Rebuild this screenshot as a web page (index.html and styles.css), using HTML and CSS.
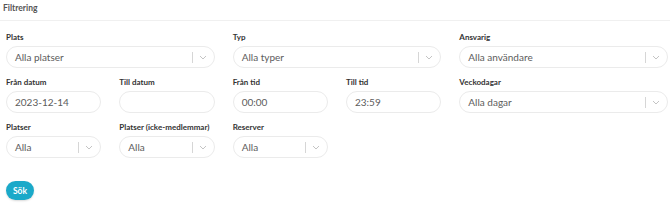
FILE: index.html
```html
<!DOCTYPE html>
<html lang="sv">
<head>
<meta charset="utf-8">
<title>Filtrering</title>
<link rel="stylesheet" href="styles.css">
</head>
<body>
<div class="panel">
  <div class="panel-header">Filtrering</div>
  <form class="filters">
    <div class="grid">
      <div class="field span2">
        <label class="label">Plats</label>
        <div class="select"><span class="value">Alla platser</span><span class="sep"></span><svg class="chev" viewBox="0 0 8 5"><path d="M1 1l3 3 3-3"/></svg></div>
      </div>
      <div class="field span2">
        <label class="label">Typ</label>
        <div class="select"><span class="value">Alla typer</span><span class="sep"></span><svg class="chev" viewBox="0 0 8 5"><path d="M1 1l3 3 3-3"/></svg></div>
      </div>
      <div class="field span2">
        <label class="label">Ansvarig</label>
        <div class="select"><span class="value">Alla användare</span><span class="sep"></span><svg class="chev" viewBox="0 0 8 5"><path d="M1 1l3 3 3-3"/></svg></div>
      </div>

      <div class="field">
        <label class="label">Från datum</label>
        <div class="input"><span class="value">2023-12-14</span></div>
      </div>
      <div class="field">
        <label class="label">Till datum</label>
        <div class="input"><span class="value"></span></div>
      </div>
      <div class="field">
        <label class="label">Från tid</label>
        <div class="input"><span class="value">00:00</span></div>
      </div>
      <div class="field">
        <label class="label">Till tid</label>
        <div class="input"><span class="value">23:59</span></div>
      </div>
      <div class="field span2">
        <label class="label">Veckodagar</label>
        <div class="select"><span class="value">Alla dagar</span><span class="sep"></span><svg class="chev" viewBox="0 0 8 5"><path d="M1 1l3 3 3-3"/></svg></div>
      </div>

      <div class="field">
        <label class="label">Platser</label>
        <div class="select"><span class="value">Alla</span><span class="sep"></span><svg class="chev" viewBox="0 0 8 5"><path d="M1 1l3 3 3-3"/></svg></div>
      </div>
      <div class="field">
        <label class="label">Platser (icke-medlemmar)</label>
        <div class="select"><span class="value">Alla</span><span class="sep"></span><svg class="chev" viewBox="0 0 8 5"><path d="M1 1l3 3 3-3"/></svg></div>
      </div>
      <div class="field">
        <label class="label">Reserver</label>
        <div class="select"><span class="value">Alla</span><span class="sep"></span><svg class="chev" viewBox="0 0 8 5"><path d="M1 1l3 3 3-3"/></svg></div>
      </div>
    </div>
    <button type="button" class="btn">Sök</button>
  </form>
</div>
</body>
</html>
```
FILE: styles.css
```css
* { box-sizing: border-box; }
html, body { margin: 0; padding: 0; background: #fff; }
body {
  font-family: Lato, "Noto Sans", sans-serif;
  color: #444;
  width: 670px;
  height: 203px;
  overflow: hidden;
}
.panel-header {
  height: 21px;
  padding: 3px 0 0 3px;
  font-size: 8.5px;
  line-height: 10px;
  font-weight: 700;
  color: #555;
  border-bottom: 1px solid #f0f0f0;
}
.filters {
  padding: 11px 2px 0 6px;
}
.grid {
  display: grid;
  grid-template-columns: repeat(6, 1fr);
  column-gap: 18px;
  row-gap: 9px;
}
.span2 { grid-column: span 2; }
.field { display: flex; flex-direction: column; }
.label {
  font-size: 8px;
  line-height: 10px;
  font-weight: 700;
  color: #333;
  margin-bottom: 4px;
  white-space: nowrap;
}
.select, .input {
  height: 22px;
  border: 1px solid #ebebeb;
  border-radius: 11px;
  background: #fff;
  display: flex;
  align-items: center;
  padding: 0 0 0 8px;
}
.value {
  flex: 1;
  font-size: 10px;
  color: #5c5c5c;
  white-space: nowrap;
}
.sep {
  width: 1px;
  height: 11px;
  background: #d6d6d6;
}
.chev {
  width: 8px;
  height: 5px;
  margin: 0 7px 0 6px;
  fill: none;
  stroke: #c4c4c4;
  stroke-width: 1;
}
.btn {
  margin-top: 23px;
  width: 28px;
  height: 19px;
  border: none;
  border-radius: 10px;
  background: #1aa9c9;
  color: #fff;
  font-family: inherit;
  font-size: 8.5px;
  font-weight: 700;
  padding: 0;
  box-shadow: 0 1px 2px rgba(0,0,0,0.15);
}
```
